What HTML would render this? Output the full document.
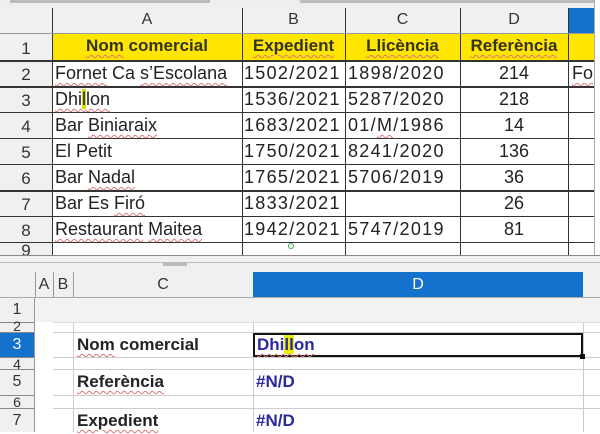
<!DOCTYPE html>
<html><head><meta charset="utf-8"><style>
*{margin:0;padding:0;box-sizing:border-box}
body{width:600px;height:432px;overflow:hidden;background:#fff;font-family:"Liberation Sans",sans-serif;position:relative;color:#222}
.a{position:absolute}
.t{position:absolute;white-space:nowrap;line-height:26px;font-size:18px}
.c{text-align:center}
.n{letter-spacing:1.3px}
.w{text-decoration:underline wavy #d77;text-decoration-thickness:1px;text-underline-offset:3px}
.h{position:absolute;font-size:16px;color:#333;text-align:center;line-height:26px}
.hl{position:absolute;background:#333}
.g{position:absolute;background:#ccc}
.b{font-weight:bold}
.bl{color:#2a2a9a;font-weight:bold}
</style></head><body>
<div class="a" style="left:0;top:0;width:600px;height:8px;background:#eee"></div>
<div class="a" style="left:10px;top:0;width:200px;height:3px;background:#bbb"></div>
<div class="a" style="left:300px;top:0;width:300px;height:3px;background:#bbb"></div>
<div class="a" style="left:0;top:8px;width:600px;height:25px;background:#f0f0f0"></div>
<div class="a" style="left:568px;top:8px;width:26px;height:25px;background:#1472cc"></div>
<div class="a" style="left:594px;top:0;width:6px;height:260px;background:#fff"></div>
<div class="hl" style="left:594px;top:0;width:1px;height:256px;background:#aaa"></div>
<div class="h" style="left:52px;top:7px;width:190px">A</div>
<div class="h" style="left:242px;top:7px;width:103px">B</div>
<div class="h" style="left:345px;top:7px;width:115px">C</div>
<div class="h" style="left:460px;top:7px;width:108px">D</div>
<div class="a" style="left:0;top:33px;width:52px;height:222px;background:#f0f0f0"></div>
<div class="a" style="left:52px;top:33px;width:542px;height:27px;background:#ffe600"></div>
<div class="hl" style="left:52px;top:8px;width:1px;height:248px"></div>
<div class="hl" style="left:242px;top:8px;width:1px;height:248px"></div>
<div class="hl" style="left:345px;top:8px;width:1px;height:248px"></div>
<div class="hl" style="left:460px;top:8px;width:1px;height:248px"></div>
<div class="hl" style="left:568px;top:8px;width:1px;height:248px"></div>
<div class="hl" style="left:0;top:33px;width:594px;height:1px;background:#999"></div>
<div class="hl" style="left:0;top:60px;width:594px;height:2px"></div>
<div class="hl" style="left:0;top:86px;width:594px;height:2px"></div>
<div class="hl" style="left:0;top:112px;width:594px;height:1px"></div>
<div class="hl" style="left:0;top:138px;width:594px;height:1px"></div>
<div class="hl" style="left:0;top:164px;width:594px;height:1px"></div>
<div class="hl" style="left:0;top:190px;width:594px;height:2px"></div>
<div class="hl" style="left:0;top:216px;width:594px;height:1px"></div>
<div class="hl" style="left:0;top:242px;width:594px;height:1px"></div>
<div class="h" style="left:0;top:36px;width:52px;font-size:17px">1</div>
<div class="h" style="left:0;top:62px;width:52px;font-size:17px">2</div>
<div class="h" style="left:0;top:88px;width:52px;font-size:17px">3</div>
<div class="h" style="left:0;top:114px;width:52px;font-size:17px">4</div>
<div class="h" style="left:0;top:140px;width:52px;font-size:17px">5</div>
<div class="h" style="left:0;top:166px;width:52px;font-size:17px">6</div>
<div class="h" style="left:0;top:192px;width:52px;font-size:17px">7</div>
<div class="h" style="left:0;top:218px;width:52px;font-size:17px">8</div>
<div class="h" style="left:0;top:238px;width:52px;font-size:17px">9</div>
<div class="t b c" style="left:52px;top:33px;width:190px;font-size:17px;color:#332"><span class="w">Nom</span> comercial</div>
<div class="t b c w" style="left:242px;top:33px;width:103px;font-size:17px;color:#332">Expedient</div>
<div class="t b c w" style="left:345px;top:33px;width:115px;font-size:17px;color:#332">Llicència</div>
<div class="t b c w" style="left:460px;top:33px;width:108px;font-size:17px;color:#332">Referència</div>
<div class="t" style="left:55px;top:60px"><span class="w">Fornet</span> Ca <span class="w">s’Escolana</span></div>
<div class="t n" style="left:244px;top:60px">1502/2021</div><div class="t n" style="left:348px;top:60px">1898/2020</div><div class="t c" style="left:460px;top:60px;width:108px">214</div>
<div class="t" style="left:572px;top:60px"><span class="w">Fo</span></div>
<div class="t" style="left:55px;top:86px"><span class="w">Dhi<span style="background:#dd0">l</span>lon</span></div>
<div class="t n" style="left:244px;top:86px">1536/2021</div><div class="t n" style="left:348px;top:86px">5287/2020</div><div class="t c" style="left:460px;top:86px;width:108px">218</div>
<div class="t" style="left:55px;top:112px">Bar <span class="w">Biniaraix</span></div>
<div class="t n" style="left:244px;top:112px">1683/2021</div><div class="t n" style="left:348px;top:112px">01/<span class="w">M</span>/1986</div><div class="t c" style="left:460px;top:112px;width:108px">14</div>
<div class="t" style="left:55px;top:138px">El Petit</div>
<div class="t n" style="left:244px;top:138px">1750/2021</div><div class="t n" style="left:348px;top:138px">8241/2020</div><div class="t c" style="left:460px;top:138px;width:108px">136</div>
<div class="t" style="left:55px;top:164px">Bar <span class="w">Nadal</span></div>
<div class="t n" style="left:244px;top:164px">1765/2021</div><div class="t n" style="left:348px;top:164px">5706/2019</div><div class="t c" style="left:460px;top:164px;width:108px">36</div>
<div class="t" style="left:55px;top:190px">Bar Es <span class="w">Firó</span></div>
<div class="t n" style="left:244px;top:190px">1833/2021</div><div class="t c" style="left:460px;top:190px;width:108px">26</div>
<div class="t" style="left:55px;top:216px"><span class="w">Restaurant</span> <span class="w">Maitea</span></div>
<div class="t n" style="left:244px;top:216px">1942/2021</div><div class="t n" style="left:348px;top:216px">5747/2019</div><div class="t c" style="left:460px;top:216px;width:108px">81</div>
<div class="a" style="left:0;top:255px;width:600px;height:43px;background:#f0f0f0"></div>
<div class="hl" style="left:0;top:255px;width:600px;height:1px;background:#888"></div>
<div class="hl" style="left:0;top:262px;width:600px;height:1px;background:#bbb"></div>
<div class="a" style="left:163px;top:263px;width:24px;height:3px;background:#bbb"></div>
<div class="a" style="left:288px;top:243px;width:6px;height:6px;border:1px solid #4a4;border-radius:50%"></div>
<div class="a" style="left:253px;top:272px;width:330px;height:26px;background:#1472cc"></div>
<div class="h" style="left:35px;top:272px;width:18px">A</div>
<div class="h" style="left:53px;top:272px;width:20px">B</div>
<div class="h" style="left:73px;top:272px;width:180px">C</div>
<div class="h" style="left:253px;top:272px;width:330px;color:#fff">D</div>
<div class="g" style="left:35px;top:272px;width:1px;height:26px;background:#999"></div>
<div class="g" style="left:53px;top:272px;width:1px;height:26px;background:#999"></div>
<div class="g" style="left:73px;top:272px;width:1px;height:26px;background:#999"></div>
<div class="g" style="left:0;top:297px;width:600px;height:1px;background:#aaa"></div>
<div class="a" style="left:0;top:298px;width:35px;height:134px;background:#f0f0f0"></div>
<div class="a" style="left:35px;top:298px;width:565px;height:24px;background:#f2f2f2"></div>
<div class="a" style="left:0;top:333px;width:34px;height:24px;background:#1472cc"></div>
<div class="g" style="left:34px;top:298px;width:1px;height:134px;background:#999"></div>
<div class="g" style="left:73px;top:322px;width:1px;height:110px"></div>
<div class="g" style="left:253px;top:322px;width:1px;height:110px"></div>
<div class="g" style="left:583px;top:322px;width:1px;height:110px"></div>
<div class="g" style="left:53px;top:322px;width:547px;height:1px;background:#ddd"></div>
<div class="g" style="left:53px;top:332px;width:547px;height:1px"></div>
<div class="g" style="left:53px;top:357px;width:547px;height:1px"></div>
<div class="g" style="left:53px;top:369px;width:547px;height:1px"></div>
<div class="g" style="left:53px;top:395px;width:547px;height:1px"></div>
<div class="g" style="left:53px;top:408px;width:547px;height:1px"></div>
<div class="g" style="left:0;top:322px;width:34px;height:1px;background:#888"></div>
<div class="g" style="left:0;top:332px;width:34px;height:1px;background:#888"></div>
<div class="g" style="left:0;top:357px;width:34px;height:1px;background:#888"></div>
<div class="g" style="left:0;top:369px;width:34px;height:1px;background:#888"></div>
<div class="g" style="left:0;top:395px;width:34px;height:1px;background:#888"></div>
<div class="g" style="left:0;top:408px;width:34px;height:1px;background:#888"></div>
<div class="h" style="left:0;top:298px;width:34px;line-height:24px">1</div>
<div class="h" style="left:0;top:319px;width:34px;line-height:14px;font-size:14px">2</div>
<div class="h" style="left:0;top:333px;width:34px;line-height:24px;color:#fff">3</div>
<div class="h" style="left:0;top:357px;width:34px;line-height:14px;font-size:14px">4</div>
<div class="h" style="left:0;top:369px;width:34px;line-height:26px">5</div>
<div class="h" style="left:0;top:396px;width:34px;line-height:13px;font-size:14px">6</div>
<div class="h" style="left:0;top:408px;width:34px;line-height:26px">7</div>
<div class="t b" style="left:77px;top:332px;font-size:17px"><span class="w">Nom</span> comercial</div>
<div class="t b w" style="left:77px;top:369px;font-size:17px">Referència</div>
<div class="t b w" style="left:77px;top:408px;font-size:17px">Expedient</div>
<div class="a" style="left:253px;top:333px;width:330px;height:24px;border:2px solid #111"></div>
<div class="a" style="left:580px;top:354px;width:5px;height:5px;background:#111"></div>
<div class="t bl" style="left:257px;top:332px;font-size:17px"><span class="w">Dhi<span style="background:#ee0">ll</span>on</span></div>
<div class="t bl" style="left:256px;top:369px;font-size:17px">#N/D</div>
<div class="t bl" style="left:256px;top:408px;font-size:17px">#N/D</div>
</body></html>
